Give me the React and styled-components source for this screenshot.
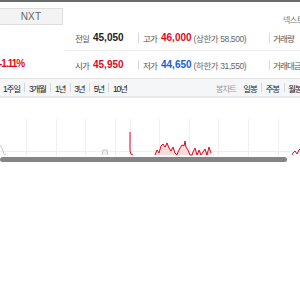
import styled, { createGlobalStyle } from "styled-components";

//------------------------------------------------------------------->

const Global = createGlobalStyle`
  html, body {
    margin: 0;
    padding: 0;
    background: #fff;
    overflow: hidden;
  }
  body {
    font-family: "Liberation Sans", "Noto Sans CJK KR", sans-serif;
    color: #333;
  }
`;

const Page = styled.div`
  width: 300px;
  height: 300px;
  overflow: hidden;
  position: relative;
`;
const TopLine = styled.div`
  height: 2px;
  background-color: #6a6a6a;
`;
const Header = styled.div`
  display: flex;
  align-items: center;
  justify-content: space-between;
  height: 23px;
  padding-top: 6px;
  box-sizing: border-box;
`;
const MarketButton = styled.div`
  width: 63px;
  height: 17px;
  box-sizing: border-box;
  background-color: #f3f3f3;
  border: 1px solid #dedede;
  border-left: none;
  color: #666;
  font-size: 10px;
  display: flex;
  align-items: center;
  justify-content: center;
  letter-spacing: 0.2px;
`;
const HeaderLink = styled.span`
  width: 17px;
  font-size: 8px;
  letter-spacing: -0.5px;
  color: #777;
  white-space: nowrap;
  margin-top: 6px;
`;
const Info = styled.div`
  display: flex;
  height: 53px;
`;
const RateBox = styled.div`
  width: 65px;
  flex-shrink: 0;
  display: flex;
  align-items: flex-end;
  padding-bottom: 9px;
  box-sizing: border-box;
`;
const Rate = styled.span`
  color: #e0081f;
  font-weight: 700;
  font-size: 10px;
  margin-left: -1px;
  letter-spacing: -1px;
`;
const Rows = styled.div`
  flex: 1;
  display: flex;
  flex-direction: column;
`;
const Row = styled.div`
  display: flex;
  align-items: center;
  height: 26px;
  white-space: nowrap;
  border-bottom: ${({ $line }) => ($line ? "1px solid #eeeeee" : "none")};
  box-sizing: border-box;
  padding-top: ${({ $line }) => ($line ? "0" : "1px")};
`;
const Cell = styled.div`
  display: flex;
  align-items: center;
  width: ${({ $w }) => $w}px;
  flex-shrink: 0;
  padding-left: ${({ $pad }) => $pad}px;
  box-sizing: border-box;
  position: relative;

  ${({ $bar }) =>
    $bar &&
    `&::before {
      content: "";
      position: absolute;
      left: 0;
      top: 50%;
      width: 1px;
      height: 10px;
      margin-top: -5px;
      background-color: #d9d9d9;
    }`}
`;
const Label = styled.span`
  font-size: 8.5px;
  letter-spacing: -0.8px;
  color: #555;
  width: ${({ $w }) => $w || 18}px;
  flex-shrink: 0;
`;
const Value = styled.span`
  font-size: 10px;
  font-weight: 700;
  color: ${({ $tone }) =>
    $tone === "up" ? "#e0081f" : $tone === "down" ? "#1a5fd1" : "#222"};
  margin-right: 2px;
`;
const Limit = styled.span`
  font-size: 8.5px;
  letter-spacing: -0.4px;
  color: #666;
`;
const TabBar = styled.div`
  display: flex;
  align-items: center;
  justify-content: space-between;
  height: 20px;
  background-color: #f5f6f8;
  border-top: 1px solid #e3e3e3;
  border-bottom: 2px solid #e6e7eb;
  box-sizing: border-box;
  padding-top: 1px;
`;
const Tabs = styled.div`
  display: flex;
  align-items: center;
  padding-left: 3px;
`;
const Tab = styled.span`
  font-size: 8.5px;
  letter-spacing: -1.2px;
  color: #222;
  position: relative;
  padding: 0 4.6px;
  &:first-child {
    padding-left: 0;
  }
  & + &::before {
    content: "";
    position: absolute;
    left: 0;
    top: 1px;
    width: 1px;
    height: 9px;
    background-color: #d5d5d5;
  }
`;
const ChartStyle = styled.span`
  font-size: 8.5px;
  letter-spacing: -1.2px;
  color: #9a9a9a;
  margin-right: 3px;
`;
const RightTabs = styled(Tabs)`
  margin-right: -6px;
`;
const ChartArea = styled.div`
  height: 68px;
  position: relative;
`;
const ChartSvg = styled.svg`
  display: block;
`;
const Scrollbar = styled.div`
  position: absolute;
  left: 0;
  bottom: 4px;
  width: 287px;
  height: 5px;
  border-radius: 3px;
  background-color: #858585;
`;

//------------------------------------------------------------------->

const gridX = [26, 56, 85, 115, 130, 159, 189, 218, 248, 278];

const redPts =
  "155,155 157,150 159,153 161,146 163,144 165,147 167,143 169,148 171,151 173,147 175,153 177,155 " +
  "178,152 180,148 182,145 184,146 185,141 186,147 188,150 190,155 192,155 193,152 195,148 197,155 " +
  "199,150 201,155 203,152 205,149 207,155 209,147 211,153";

function Chart() {
  return (
    <ChartSvg width="300" height="60" viewBox="0 98 300 60">
      <line x1="0" y1="151.5" x2="300" y2="151.5" stroke="#efefef" />
      {gridX.map((x) => (
        <line key={x} x1={x + 0.5} y1="119" x2={x + 0.5} y2="156" stroke="#efefef" />
      ))}
      <polyline points="0,145 2,148 4,154 6,155" fill="none" stroke="#bbb" strokeWidth="0.8" />
      <polyline points="102,155 103,150 107,150 108,155" fill="#eee" stroke="#bbb" strokeWidth="0.8" />
      <polyline points="130,132 130,151 131,154 133,155" fill="none" stroke="#e0081f" strokeWidth="1" />
      <polygon points={redPts + " 211,155"} fill="#fbdada" />
      <polyline points={redPts} fill="none" stroke="#e0081f" strokeWidth="1" />
      <polyline points="292,155 293,153 295,151 297,154 299,150 300,149" fill="none" stroke="#e0081f" strokeWidth="1" />
    </ChartSvg>
  );
}

export default function App() {
  return (
    <Page>
      <Global />
      <TopLine />
      <Header>
        <MarketButton>NXT</MarketButton>
        <HeaderLink>넥스트레</HeaderLink>
      </Header>
      <Info>
        <RateBox>
          <Rate>-1.11%</Rate>
        </RateBox>
        <Rows>
          <Row $line>
            <Cell $w={73} $pad={10}>
              <Label>전일</Label>
              <Value>45,050</Value>
            </Cell>
            <Cell $w={131} $pad={5} $bar>
              <Label>고가</Label>
              <Value $tone="up">46,000</Value>
              <Limit>(상한가 58,500)</Limit>
            </Cell>
            <Cell $w={40} $pad={4} $bar>
              <Label $w={40}>거래량</Label>
            </Cell>
          </Row>
          <Row>
            <Cell $w={73} $pad={10}>
              <Label>시가</Label>
              <Value $tone="up">45,950</Value>
            </Cell>
            <Cell $w={131} $pad={5} $bar>
              <Label>저가</Label>
              <Value $tone="down">44,650</Value>
              <Limit>(하한가 31,550)</Limit>
            </Cell>
            <Cell $w={40} $pad={4} $bar>
              <Label $w={40}>거래대금</Label>
            </Cell>
          </Row>
        </Rows>
      </Info>
      <TabBar>
        <Tabs>
          <Tab>1주일</Tab>
          <Tab>3개월</Tab>
          <Tab>1년</Tab>
          <Tab>3년</Tab>
          <Tab>5년</Tab>
          <Tab>10년</Tab>
        </Tabs>
        <RightTabs>
          <ChartStyle>봉차트</ChartStyle>
          <Tab>일봉</Tab>
          <Tab>주봉</Tab>
          <Tab>월봉</Tab>
        </RightTabs>
      </TabBar>
      <ChartArea>
        <Chart />
        <Scrollbar />
      </ChartArea>
    </Page>
  );
}
